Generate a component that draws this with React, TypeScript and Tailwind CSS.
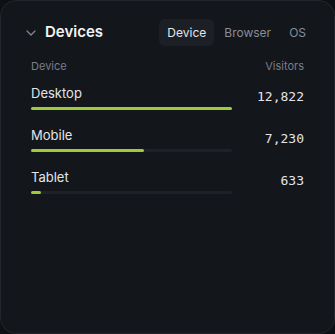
import React from "react";

const rows = [
  { label: "Desktop", value: 12822 },
  { label: "Mobile", value: 7230 },
  { label: "Tablet", value: 633 },
];

const tabs = ["Device", "Browser", "OS"];

export default function App() {
  const max = Math.max(...rows.map((r) => r.value));

  return (
    <div className="h-[334px] w-[335px] bg-[#0e1013] font-['Inter',sans-serif]">
      <div className="h-full w-full rounded-2xl border border-[#23262c] bg-[#13161b]">
        {/* Header */}
        <div className="flex items-center justify-between pl-[25px] pr-5 pt-[18px]">
          <div className="flex items-center">
            <svg width="10" height="6" viewBox="0 0 10 6" fill="none">
              <path
                d="M1 1l4 4 4-4"
                stroke="#7f848d"
                strokeWidth="1.3"
                strokeLinecap="round"
                strokeLinejoin="round"
              />
            </svg>
            <h2 className="ml-[9px] text-[15px] font-semibold text-[#f2f3f5]">
              Devices
            </h2>
          </div>
          <div className="flex items-center gap-0.5">
            {tabs.map((t, i) => (
              <button
                key={t}
                className={
                  i === 0
                    ? "h-[27px] rounded-md bg-[#1c1f25] px-2 text-xs text-[#e6e7ea]"
                    : "h-[27px] rounded-md px-2 text-xs text-[#888d96]"
                }
              >
                {t}
              </button>
            ))}
          </div>
        </div>

        {/* Table */}
        <div className="mt-3 px-[30px]">
          <div className="flex justify-between text-[11px] leading-4 text-[#7a7f88]">
            <span>Device</span>
            <span>Visitors</span>
          </div>
          <div className="mt-[9px] flex flex-col gap-[15px]">
            {rows.map((r) => (
              <div key={r.label} className="flex items-center justify-between">
                <div className="w-[201px]">
                  <div className="text-[13px] leading-5 text-[#e4e5e8]">{r.label}</div>
                  <div className="mt-1 h-[3px] w-full rounded-full bg-[#1e2127]">
                    <div
                      className="h-full rounded-full bg-[#9fcb3a]"
                      style={{ width: `${(r.value / max) * 100}%` }}
                    />
                  </div>
                </div>
                <span className="font-['DejaVu_Sans_Mono',monospace] text-[13px] text-[#e4e5e8]">
                  {r.value.toLocaleString("en-US")}
                </span>
              </div>
            ))}
          </div>
        </div>
      </div>
    </div>
  );
}
